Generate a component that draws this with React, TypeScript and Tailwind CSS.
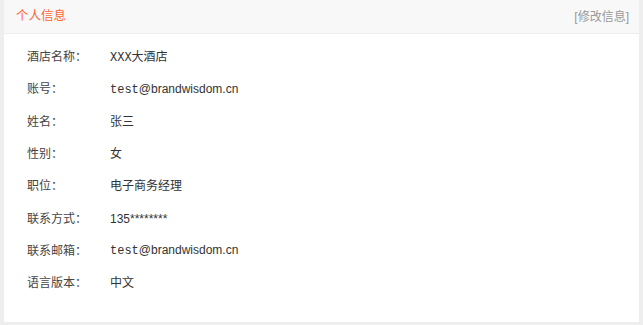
import React from "react";

const rows: { label: string; value: React.ReactNode }[] = [
  { label: "酒店名称：", value: <><span className="font-['Liberation_Mono',monospace] text-[12px]">XXX</span>大酒店</> },
  { label: "账号：", value: <><span className="font-['Liberation_Mono',monospace] text-[12px]">test</span>@brandwisdom.cn</> },
  { label: "姓名：", value: "张三" },
  { label: "性别：", value: "女" },
  { label: "职位：", value: "电子商务经理" },
  { label: "联系方式：", value: "135********" },
  { label: "联系邮箱：", value: <><span className="font-['Liberation_Mono',monospace] text-[12px]">test</span>@brandwisdom.cn</> },
  { label: "语言版本：", value: "中文" },
];

export default function App() {
  return (
    <div className="w-[643px] h-[325px] bg-[#eeeeee] pl-[4px] pr-[4px] pb-[3px] font-['Liberation_Sans','Noto_Sans_CJK_SC',sans-serif]">
      <div className="h-full bg-white flex flex-col">
        <div className="h-[34px] bg-[#f8f8f8] border-b border-[#ededed] flex items-center justify-between pl-[12px] pr-[10px]">
          <span className="text-[12.5px] text-[#ff6633]">个人信息</span>
          <span className="text-[12px] text-[#9a9a9a]">[修改信息]</span>
        </div>
        <div className="pt-[7px] pl-[23px] flex flex-col">
          {rows.map((r) => (
            <div key={r.label} className="h-[32.3px] flex items-center text-[12px]">
              <span className="w-[83px] text-[#444]">{r.label}</span>
              <span className="text-[#333]">{r.value}</span>
            </div>
          ))}
        </div>
      </div>
    </div>
  );
}
